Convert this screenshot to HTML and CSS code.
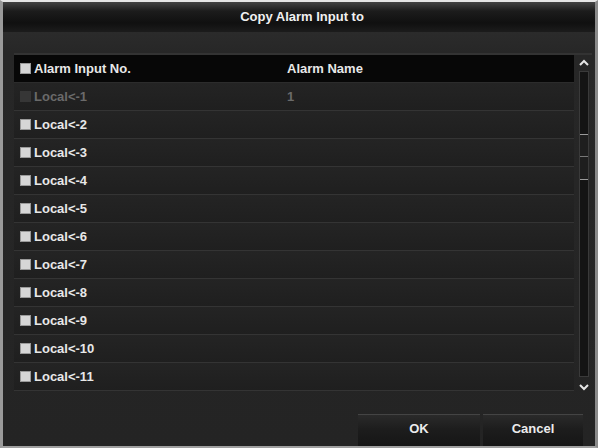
FILE: index.html
```html
<!DOCTYPE html>
<html>
<head>
<meta charset="utf-8">
<link rel="stylesheet" href="styles.css">
</head>
<body>
<div class="dialog">
  <div class="titlebar">Copy Alarm Input to</div>
  <div class="content">
    <div class="table-wrap">
      <div class="table">
        <div class="row head">
          <div class="c1"><span class="cb"></span>Alarm Input No.</div>
          <div class="c2">Alarm Name</div>
        </div>
        <div class="row disabled">
          <div class="c1"><span class="cb off"></span>Local&lt;-1</div>
          <div class="c2">1</div>
        </div>
        <div class="row"><div class="c1"><span class="cb"></span>Local&lt;-2</div><div class="c2"></div></div>
        <div class="row"><div class="c1"><span class="cb"></span>Local&lt;-3</div><div class="c2"></div></div>
        <div class="row"><div class="c1"><span class="cb"></span>Local&lt;-4</div><div class="c2"></div></div>
        <div class="row"><div class="c1"><span class="cb"></span>Local&lt;-5</div><div class="c2"></div></div>
        <div class="row"><div class="c1"><span class="cb"></span>Local&lt;-6</div><div class="c2"></div></div>
        <div class="row"><div class="c1"><span class="cb"></span>Local&lt;-7</div><div class="c2"></div></div>
        <div class="row"><div class="c1"><span class="cb"></span>Local&lt;-8</div><div class="c2"></div></div>
        <div class="row"><div class="c1"><span class="cb"></span>Local&lt;-9</div><div class="c2"></div></div>
        <div class="row"><div class="c1"><span class="cb"></span>Local&lt;-10</div><div class="c2"></div></div>
        <div class="row"><div class="c1"><span class="cb"></span>Local&lt;-11</div><div class="c2"></div></div>
      </div>
      <div class="scrollbar">
        <svg class="arrow" width="10" height="8" viewBox="0 0 10 8"><path d="M1 6 L5 2 L9 6" fill="none" stroke="#e6e6e6" stroke-width="2"/></svg>
        <div class="track">
          <div class="thumb-space"></div>
          <div class="thumb"></div>
        </div>
        <svg class="arrow" width="10" height="8" viewBox="0 0 10 8"><path d="M1 2 L5 6 L9 2" fill="none" stroke="#e6e6e6" stroke-width="2"/></svg>
      </div>
    </div>
    <div class="footer">
      <div class="btn ok">OK</div>
      <div class="btn cancel">Cancel</div>
    </div>
  </div>
</div>
</body>
</html>
```
FILE: styles.css
```css
html, body {
  margin: 0;
  padding: 0;
  background: #d8d8d8;
}
body {
  width: 598px;
  height: 448px;
  font-family: "Liberation Sans", Arial, sans-serif;
  font-size: 13px;
  font-weight: bold;
  color: #e8e8e8;
}
.dialog {
  box-sizing: border-box;
  width: 598px;
  height: 448px;
  border-top: 2px solid #e6e6e6;
  border-left: 3px solid #9a9a9a;
  border-right: 3px solid #8a8a8a;
  border-bottom: 2px solid #a0a0a0;
  background: #252525;
  display: flex;
  flex-direction: column;
}
.titlebar {
  height: 30px;
  line-height: 30px;
  text-align: center;
  background: linear-gradient(#444 0%, #1c1c1c 30%, #101010 70%, #1c1c1c 100%);
  color: #f0f0f0;
  padding-left: 6px;
}
.content {
  flex: 1;
  display: flex;
  flex-direction: column;
  padding: 21px 3px 0 11px;
  background: linear-gradient(#2b2b2b 0px, #272727 20px, #242424 100%);
}
.table-wrap {
  display: flex;
  border-top: 2px solid #333;
}
.table {
  width: 562px;
  display: flex;
  flex-direction: column;
}
.row {
  height: 28px;
  display: flex;
  align-items: center;
  box-sizing: border-box;
  border-bottom: 1px solid #343434;
  background: linear-gradient(#242424 0%, #1f1f1f 100%);
}
.row.head {
  height: 28px;
  background: #070707;
  border-bottom: 1px solid #2c2c2c;
}
.c1 {
  width: 267px;
  padding-left: 6px;
  display: flex;
  align-items: center;
}
.c2 {
  flex: 1;
}
.cb {
  width: 11px;
  height: 11px;
  background: #d6d6d6;
  border: 1px solid #9a9a9a;
  box-sizing: border-box;
  margin-right: 3px;
}
.cb.off {
  background: #363636;
  border-color: #363636;
}
.row.disabled {
  color: #6a6a6a;
}
.scrollbar {
  width: 16px;
  margin-left: 2px;
  display: flex;
  flex-direction: column;
  align-items: center;
  padding-top: 4px;
}
.arrow {
  flex: none;
}
.track {
  width: 10px;
  flex: 1;
  margin: 4px 0 6px;
  background: #141414;
  border: 1px solid #3a3a3a;
  box-sizing: border-box;
  display: flex;
  flex-direction: column;
}
.thumb-space {
  height: 62px;
}
.thumb {
  height: 46px;
  background: #1e1e1e;
  border-top: 1px solid #9a9a9a;
  border-bottom: 1px solid #9a9a9a;
  box-sizing: border-box;
  background-image: linear-gradient(transparent 21px, #777 21px, #777 22px, transparent 22px);
}
.footer {
  flex: 1;
  display: flex;
  justify-content: flex-end;
  align-items: flex-end;
  padding-right: 9px;
  gap: 3px;
}
.btn {
  width: 122px;
  height: 32px;
  line-height: 28px;
  text-align: center;
  background: linear-gradient(#2a2a2a 0%, #1c1c1c 50%, #161616 100%);
  border-top: 1px solid #444;
  box-sizing: border-box;
  color: #ececec;
}
.btn.cancel {
  width: 100px;
}
```
